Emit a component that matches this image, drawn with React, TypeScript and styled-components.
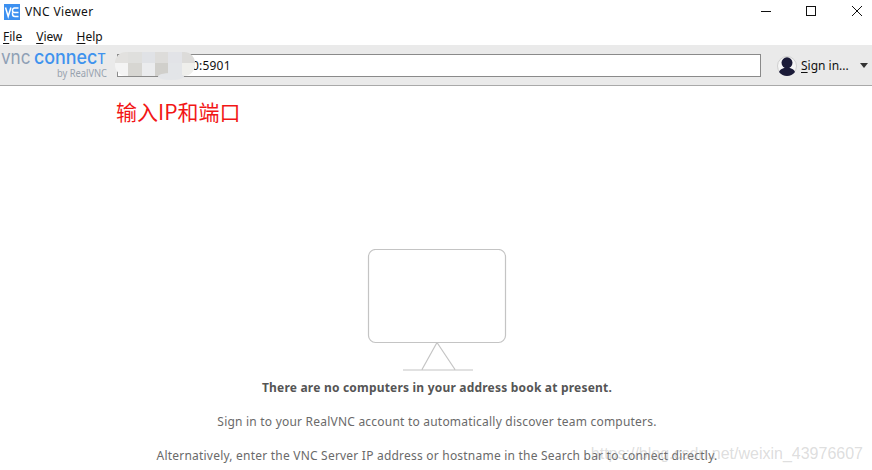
import React from 'react';
import styled, { createGlobalStyle } from 'styled-components';

const Global = createGlobalStyle`
  html, body { margin: 0; padding: 0; background: #fff; }
  body { font-family: "Noto Sans", "Open Sans", sans-serif; overflow: hidden; }
`;
const Win = styled.div`width: 872px; height: 470px; position: relative; overflow: hidden; display: flex; flex-direction: column; background: #fff;`;
const TitleBar = styled.div`height: 24px; display: flex; align-items: center; padding-left: 4px; color: #111;`;
const AppIcon = styled.svg`width: 16px; height: 16px; margin-right: 5px;`;
const TitleText = styled.span`flex: 1; font-size: 12px; letter-spacing: .35px; padding-bottom: 2px;`;
const WinBtn = styled.svg`width: 46px; height: 12px; flex: none;`;
const MenuBar = styled.div`height: 21px; box-sizing: border-box; padding: 3px 0 0 3px; display: flex; align-items: center; gap: 14px; font-size: 12px; color: #111;`;
const Ul = styled.span`text-decoration: underline; text-underline-offset: 2px;`;
const Toolbar = styled.div`height: 40px; background: #eaeaea; border-bottom: 1px solid #a9a9a9; display: flex; align-items: center;`;
const Logo = styled.svg`width: 106px; height: 34px; margin: 0 10px 0 1px; flex: none; font-family: Inter, sans-serif;`;
const LogoCap = styled.tspan`font-size: 14px; text-transform: uppercase;`;
const Search = styled.div`position: relative; width: 644px; height: 23px; border: 1px solid #8a8a8a; background: #fff; box-sizing: border-box; margin-right: 16px; font-size: 12px; line-height: 21px; padding-left: 74px; letter-spacing: .2px; color: #111;`;
const Mosaic = styled.div`position: absolute; left: -3px; top: -3px; width: 80px; height: 24px; display: grid; grid-template-columns: repeat(6, 1fr); grid-template-rows: 11px 13px; border-radius: 11px; overflow: hidden;`;
const Tile = styled.i<{ $c: string }>`background: ${p => p.$c};`;
const Blob = styled.div`position: absolute; left: 40px; top: 18px; width: 26px; height: 7px; border-radius: 50%; background: #e3e5e8;`;
const SignIn = styled.div`display: flex; align-items: center; font-size: 12px; color: #111;`;
const Avatar = styled.svg`width: 20px; height: 20px; margin: 2px 4px 0 0;`;
const Caret = styled.svg`width: 8px; height: 5px; margin-left: 11px;`;
const Body = styled.div`flex: 1; position: relative; display: flex; flex-direction: column; align-items: center; padding: 163px 0 0 2px;`;
const Note = styled.div`position: absolute; left: 116px; top: 11px; font-size: 21px; line-height: 28px; color: #f21616; font-family: "Noto Sans CJK SC", "Noto Sans", sans-serif;`;
const Strong = styled.div`font-size: 12px; font-weight: 700; color: #555; margin-top: 8px; line-height: 17px; letter-spacing: .2px;`;
const Line = styled.div`font-size: 12px; color: #6a6a6a; margin-top: 17px; line-height: 17px; letter-spacing: .215px;`;
const Mark = styled.div`position: absolute; right: 9px; bottom: 7px; font-size: 16px; color: rgba(170,170,170,.4); font-family: "Liberation Sans", sans-serif;`;

const tiles = ['#e2e1df','#dfdfdd','#e0e2e6','#dddcda','#e2e3e7','#dcdbd9','#f4f4f4','#d7d6d2','#ebecee','#d0cfcb','#e3e5e8','#efefec'];

export default function App() {
  return (
    <Win>
      <Global />
      <TitleBar>
        <AppIcon viewBox="0 0 16 16"><rect width="16" height="16" fill="#3c90f0"/><path d="M1.500 3.500l2.700 9 2.700-9M14.500 4H10.500a2 2 0 0 0-2 2.200v.3a2 2 0 0 0 2 2h4M8.500 8.500v1.500a2.500 2.500 0 0 0 2.500 2.500h3.500" fill="none" stroke="#fff" strokeWidth="1.500"/></AppIcon>
        <TitleText>VNC Viewer</TitleText>
        <WinBtn viewBox="0 0 46 12"><path d="M27 5.500h10" stroke="#111"/></WinBtn>
        <WinBtn viewBox="0 0 46 12"><rect x="26.500" y="0.500" width="9" height="9" fill="none" stroke="#111"/></WinBtn>
        <WinBtn viewBox="0 0 46 12"><path d="M26 0l10 10M36 0L26 10" stroke="#111"/></WinBtn>
      </TitleBar>
      <MenuBar>
        <span><Ul>F</Ul>ile</span>
        <span><Ul>V</Ul>iew</span>
        <span><Ul>H</Ul>elp</span>
      </MenuBar>
      <Toolbar>
        <Logo viewBox="0 0 106 34">
          <text transform="translate(0 16) scale(.9 1)" fontSize="19" fill="#8fa0b5">vnc</text>
          <text transform="translate(33 16) scale(.94 1)" fontSize="19" fontWeight="500" fill="#3f93ee">connec<LogoCap>t</LogoCap></text>
          <text x="106" y="29" textAnchor="end" fontFamily="Noto Sans, sans-serif" fontSize="10.500" fill="#98a2ae" textLength="50" lengthAdjust="spacingAndGlyphs">by RealVNC</text>
        </Logo>
        <Search>
          0:5901
          <Mosaic>{tiles.map((c, i) => <Tile key={i} $c={c} />)}</Mosaic>
          <Blob />
        </Search>
        <SignIn>
          <Avatar viewBox="0 0 20 20">
            <circle cx="10" cy="10" r="9.500" fill="#f5f5f5" stroke="#cfcfcf"/>
            <circle cx="10" cy="6.800" r="5.500" fill="#1b1b38"/>
            <path d="M2 16c1-3 5-4.500 8-4.500s7 1.500 8 4.500c-2 2.700-5 4-8 4s-6-1.300-8-4z" fill="#1b1b38"/>
          </Avatar>
          <span><Ul>S</Ul>ign in...</span>
          <Caret viewBox="0 0 8 5"><path d="M0 0h8L4 5z" fill="#333"/></Caret>
        </SignIn>
      </Toolbar>
      <Body>
        <Note>输入IP和端口</Note>
        <svg width="140" height="122" viewBox="0 0 140 122">
          <rect x="1.500" y="0.500" width="137" height="93" rx="7" fill="none" stroke="#c4c4c4" strokeWidth="1.200"/>
          <path d="M70 93.500L55 120.500M70 93.500L88 120.500M36 121h70" fill="none" stroke="#c4c4c4" strokeWidth="1.200"/>
        </svg>
        <Strong>There are no computers in your address book at present.</Strong>
        <Line>Sign in to your RealVNC account to automatically discover team computers.</Line>
        <Line>Alternatively, enter the VNC Server IP address or hostname in the Search bar to connect directly.</Line>
        <Mark>https://blog.csdn.net/weixin_43976607</Mark>
      </Body>
    </Win>
  );
}
